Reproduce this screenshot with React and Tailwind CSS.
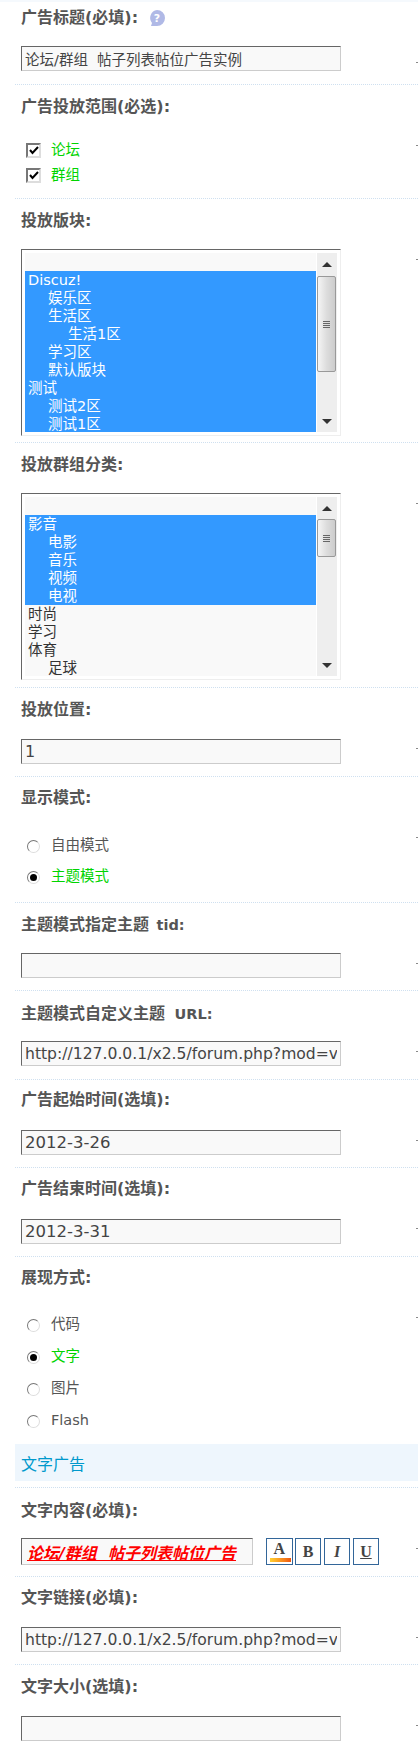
import React from 'react';

function Row({ children, className = '' }) {
  return (
    <div className={`relative pl-[6px] border-b border-dotted border-[#cfe0f0] ${className}`}>
      {children}
      <span className="absolute right-0 top-[60px] w-[2px] h-px bg-[#888888]" />
    </div>
  );
}

function Label({ children }) {
  return <div className="h-[20px] leading-[20px] text-[16px] font-bold text-[#555555] whitespace-pre">{children}</div>;
}

function TextInput({ value = '', size = 'text-[14.5px]' }) {
  return (
    <input
      readOnly
      value={value}
      className={`block w-[320px] h-[25px] px-[3px] ${size} text-[#444444] bg-[#f9f9f9] border border-t-[#666666] border-l-[#666666] border-r-[#cccccc] border-b-[#cccccc] outline-none`}
    />
  );
}

function Check({ label }) {
  return (
    <div className="flex items-center h-[25px] pl-[5px]">
      <span className="flex items-center justify-center w-[15px] h-[15px] bg-white border-2 border-t-[#777777] border-l-[#777777] border-r-[#dddddd] border-b-[#dddddd]">
        <svg width="10" height="9" viewBox="0 0 10 9">
          <path d="M1 4 L3.5 7 L9 1" fill="none" stroke="#000" strokeWidth="2" />
        </svg>
      </span>
      <span className="ml-[10px] text-[14.5px] text-[#00d400]">{label}</span>
    </div>
  );
}

function Radio({ label, on, className = '' }) {
  return (
    <div className={`flex items-center pl-[6px] ${className}`}>
      <span className="flex items-center justify-center w-[13px] h-[13px] rounded-full bg-white border border-t-[#777777] border-l-[#777777] border-r-[#dddddd] border-b-[#dddddd]">
        {on && <span className="w-[7px] h-[7px] rounded-full bg-black" />}
      </span>
      <span className={`ml-[11px] text-[14.5px] ${on ? 'text-[#00d400]' : 'text-[#555555]'}`}>{label}</span>
    </div>
  );
}

function Scrollbar({ thumbClass }) {
  return (
    <div className="relative w-[20px] ml-px bg-[#eeeeee] flex flex-col items-center">
      <div className="absolute top-[9px] left-[5px] w-0 h-0 border-x-[5px] border-x-transparent border-b-[5px] border-b-[#333333]" />
      <div className={`w-[19px] self-start border border-[#999999] rounded-[2px] bg-gradient-to-r from-[#f5f5f5] via-[#dddddd] to-[#cccccc] flex flex-col items-center justify-center ${thumbClass}`}>
        <div className="flex flex-col gap-px">
          <span className="w-[7px] h-px bg-[#666666]" />
          <span className="w-[7px] h-px bg-[#666666]" />
          <span className="w-[7px] h-px bg-[#666666]" />
          <span className="w-[7px] h-px bg-[#666666]" />
        </div>
      </div>
      <div className="absolute bottom-[8px] left-[5px] w-0 h-0 border-x-[5px] border-x-transparent border-t-[5px] border-t-[#333333]" />
    </div>
  );
}

function ListBox({ options, thumbClass }) {
  return (
    <div className="flex w-[320px] h-[187px] p-[3px] bg-white border border-t-[#666666] border-l-[#666666] border-r-[#eeeeee] border-b-[#eeeeee]">
      <div className="w-[291px] bg-[#f9f9f9] overflow-hidden">
        <div className="h-[18px]" />
        {options.map((o, i) => (
          <div
            key={i}
            className={`h-[18px] leading-[18px] text-[14.5px] ${o.sel ? 'bg-[#3399ff] text-white' : 'text-[#333333]'} ${o.cls}`}
          >
            {o.t}
          </div>
        ))}
      </div>
      <Scrollbar thumbClass={thumbClass} />
    </div>
  );
}

const forums = [
  { t: 'Discuz!', sel: true, cls: 'pl-[3px]' },
  { t: '娱乐区', sel: true, cls: 'pl-[23px]' },
  { t: '生活区', sel: true, cls: 'pl-[23px]' },
  { t: '生活1区', sel: true, cls: 'pl-[43px]' },
  { t: '学习区', sel: true, cls: 'pl-[23px]' },
  { t: '默认版块', sel: true, cls: 'pl-[23px]' },
  { t: '测试', sel: true, cls: 'pl-[3px]' },
  { t: '测试2区', sel: true, cls: 'pl-[23px]' },
  { t: '测试1区', sel: true, cls: 'pl-[23px]' },
];

const groups = [
  { t: '影音', sel: true, cls: 'pl-[3px]' },
  { t: '电影', sel: true, cls: 'pl-[23px]' },
  { t: '音乐', sel: true, cls: 'pl-[23px]' },
  { t: '视频', sel: true, cls: 'pl-[23px]' },
  { t: '电视', sel: true, cls: 'pl-[23px]' },
  { t: '时尚', cls: 'pl-[3px]' },
  { t: '学习', cls: 'pl-[3px]' },
  { t: '体育', cls: 'pl-[3px]' },
  { t: '足球', cls: 'pl-[23px]' },
];

const url = 'http://127.0.0.1/x2.5/forum.php?mod=viewthread&tid=1';

function StyleButton({ children, className = '', bar }) {
  return (
    <div className="relative flex items-center justify-center w-[26.5px] h-[27px] bg-white border border-[#336699]">
      <span className={`text-[16px] leading-none font-bold text-[#444444] font-['Liberation_Serif',serif] ${className}`}>{children}</span>
      {bar && <span className="absolute left-[3px] right-[1px] bottom-[2px] h-[4px] bg-gradient-to-r from-[#ffd030] to-[#ee5510]" />}
    </div>
  );
}

export default function App() {
  return (
    <div className="w-[418px] h-[1742px] overflow-hidden bg-white pl-[15px] font-['DejaVu_Sans','Noto_Sans_CJK_SC',sans-serif]">
      <div className="-ml-[15px] h-[2px] bg-[#f5f9fd]" />

      <Row className="pt-[6px] pb-[13px]">
        <div className="flex items-center">
          <Label>广告标题(必填):</Label>
          <svg className="ml-[11px]" width="16" height="16" viewBox="0 0 16 16">
            <path d="M8 0 a8 8 0 0 1 0 16 H2 L3 13 A8 8 0 0 1 8 0 z" fill="#b0b9e6" />
            <text x="8" y="12" textAnchor="middle" fontSize="11" fontWeight="bold" fill="#fff">?</text>
          </svg>
        </div>
        <div className="mt-[18px]">
          <TextInput value="论坛/群组  帖子列表帖位广告实例" />
        </div>
      </Row>

      <Row className="pt-[12px] pb-[10px]">
        <Label>广告投放范围(必选):</Label>
        <div className="mt-[21px]">
          <Check label="论坛" />
          <Check label="群组" />
        </div>
      </Row>

      <Row className="pt-[12px] pb-[6px]">
        <Label>投放版块:</Label>
        <div className="mt-[18px]">
          <ListBox options={forums} thumbClass="mt-[23px] h-[96px]" />
        </div>
      </Row>

      <Row className="pt-[12px] pb-[7px]">
        <Label>投放群组分类:</Label>
        <div className="mt-[18px]">
          <ListBox options={groups} thumbClass="mt-[22px] h-[38px]" />
        </div>
      </Row>

      <Row className="pt-[12px] pb-[12px]">
        <Label>投放位置:</Label>
        <div className="mt-[19px]">
          <TextInput size="text-[16px]" value="1" />
        </div>
      </Row>

      <Row className="pt-[11px] pb-[15px]">
        <Label>显示模式:</Label>
        <div className="mt-[28px] flex flex-col gap-[11px]">
          <Radio label="自由模式" className="h-[20px]" />
          <Radio label="主题模式" on className="h-[20px]" />
        </div>
      </Row>

      <Row className="pt-[12px] pb-[12px]">
        <Label>主题模式指定主题 <span className="ml-[2px] text-[14.5px]">tid:</span></Label>
        <div className="mt-[18px]">
          <TextInput />
        </div>
      </Row>

      <Row className="pt-[13px] pb-[13px]">
        <Label>主题模式自定义主题 <span className="ml-[4px] text-[14.5px]">URL:</span></Label>
        <div className="mt-[17px]">
          <TextInput size="text-[15.6px]" value={url} />
        </div>
      </Row>

      <Row className="pt-[10px] pb-[12px]">
        <Label>广告起始时间(选填):</Label>
        <div className="mt-[20px]">
          <TextInput size="text-[16.5px]" value="2012-3-26" />
        </div>
      </Row>

      <Row className="pt-[11px] pb-[12px]">
        <Label>广告结束时间(选填):</Label>
        <div className="mt-[20px]">
          <TextInput size="text-[16.5px]" value="2012-3-31" />
        </div>
      </Row>

      <div className="relative pl-[6px] pt-[11px] h-[187px]">
        <Label>展现方式:</Label>
        <div className="mt-[27px] flex flex-col gap-[12px]">
          <Radio label="代码" className="h-[20px]" />
          <Radio label="文字" on className="h-[20px]" />
          <Radio label="图片" className="h-[20px]" />
          <Radio label="Flash" className="h-[20px]" />
        </div>
        <span className="absolute right-0 top-[60px] w-[2px] h-px bg-[#888888]" />
      </div>

      <div className="pb-[6px] border-b border-dotted border-[#cfe0f0]">
        <div className="h-[37px] pl-[6px] pt-[2px] leading-[37px] bg-[#eef6fd] text-[16px] text-[#0099cc]">文字广告</div>
      </div>

      <Row className="pt-[13px] pb-[11px]">
        <Label>文字内容(必填):</Label>
        <div className="mt-[17px] flex items-center">
          <input
            readOnly
            value="论坛/群组  帖子列表帖位广告"
            className="block w-[232px] h-[27px] px-[5px] text-[16px] font-bold italic underline text-[#ff0000] bg-[#f9f9f9] border border-t-[#666666] border-l-[#666666] border-r-[#cccccc] border-b-[#cccccc] outline-none"
          />
          <div className="ml-[13px] flex gap-[2.4px]">
            <StyleButton bar className="-mt-[5px]">A</StyleButton>
            <StyleButton>B</StyleButton>
            <StyleButton className="italic">I</StyleButton>
            <StyleButton className="underline">U</StyleButton>
          </div>
        </div>
      </Row>

      <Row className="pt-[11px] pb-[12px]">
        <Label>文字链接(必填):</Label>
        <div className="mt-[19px]">
          <TextInput size="text-[15.6px]" value={url} />
        </div>
      </Row>

      <Row className="pt-[12px] pb-[0px] border-b-0">
        <Label>文字大小(选填):</Label>
        <div className="mt-[19px]">
          <TextInput />
        </div>
      </Row>
    </div>
  );
}
